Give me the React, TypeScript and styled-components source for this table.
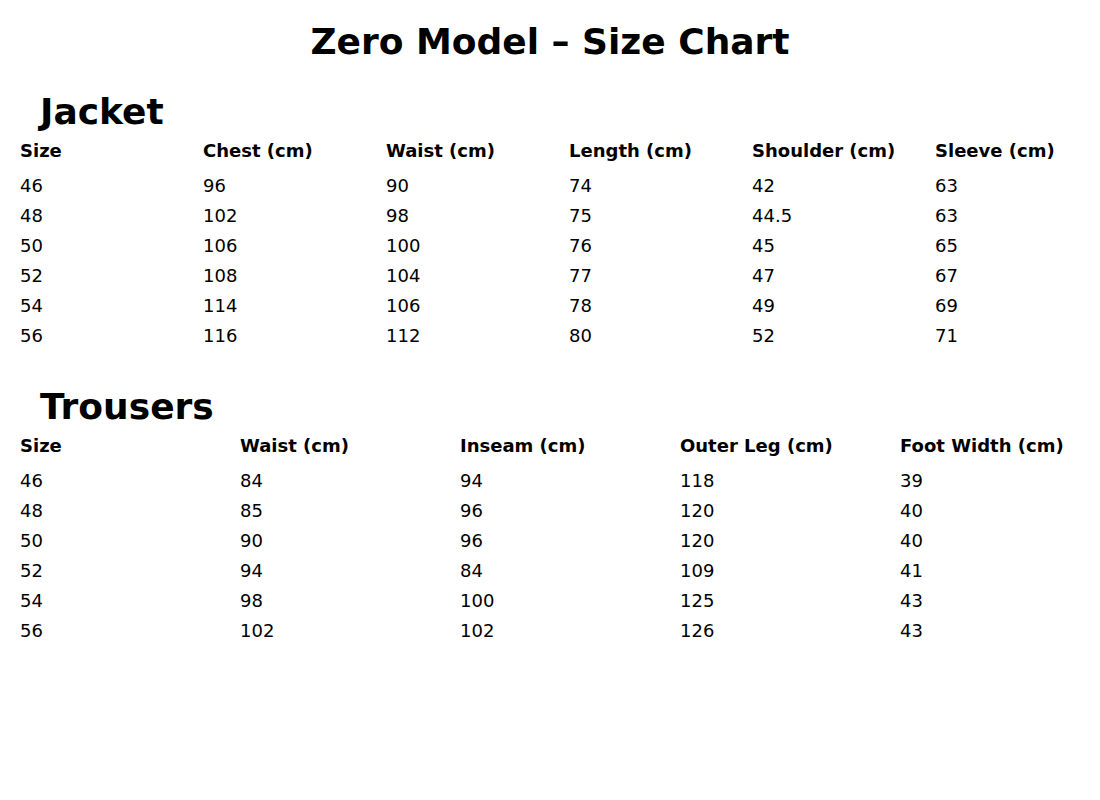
import React from "react";
import styled, { createGlobalStyle } from "styled-components";

const Global = createGlobalStyle`
  html, body { margin: 0; padding: 0; background: #fff; }
  body { font-family: "DejaVu Sans", "Liberation Sans", sans-serif; color: #000; }
`;

const Page = styled.div`
  width: 1100px;
  padding-top: 22px;
`;

const Title = styled.h1`
  margin: 0;
  font-size: 36px;
  line-height: 40px;
  font-weight: bold;
  text-align: center;
`;

const Section = styled.section<{ $top: number }>`
  margin-top: ${(p) => p.$top}px;
`;

const SectionTitle = styled.h2`
  margin: 0 0 4px 40px;
  font-size: 36px;
  line-height: 40px;
  font-weight: bold;
`;

const Grid = styled.div<{ $cols: number }>`
  display: grid;
  grid-template-columns: repeat(${(p) => p.$cols}, ${(p) => Math.floor(1100 / p.$cols)}px);
  width: 1100px;
`;

const HeadCell = styled.div`
  padding-left: 20px;
  height: 30px;
  line-height: 30px;
  margin-bottom: 5px;
  font-size: 18px;
  font-weight: bold;
  white-space: nowrap;
`;

const Cell = styled.div`
  padding-left: 20px;
  height: 30px;
  line-height: 30px;
  font-size: 18px;
  white-space: nowrap;
`;

type TableProps = { head: string[]; rows: string[][] };

const Table = ({ head, rows }: TableProps) => (
  <Grid $cols={head.length}>
    {head.map((h) => (
      <HeadCell key={h}>{h}</HeadCell>
    ))}
    {rows.map((r, i) => r.map((c, j) => <Cell key={`${i}-${j}`}>{c}</Cell>))}
  </Grid>
);

const jacket = {
  head: ["Size", "Chest (cm)", "Waist (cm)", "Length (cm)", "Shoulder (cm)", "Sleeve (cm)"],
  rows: [
    ["46", "96", "90", "74", "42", "63"],
    ["48", "102", "98", "75", "44.5", "63"],
    ["50", "106", "100", "76", "45", "65"],
    ["52", "108", "104", "77", "47", "67"],
    ["54", "114", "106", "78", "49", "69"],
    ["56", "116", "112", "80", "52", "71"],
  ],
};

const trousers = {
  head: ["Size", "Waist (cm)", "Inseam (cm)", "Outer Leg (cm)", "Foot Width (cm)"],
  rows: [
    ["46", "84", "94", "118", "39"],
    ["48", "85", "96", "120", "40"],
    ["50", "90", "96", "120", "40"],
    ["52", "94", "84", "109", "41"],
    ["54", "98", "100", "125", "43"],
    ["56", "102", "102", "126", "43"],
  ],
};

export default function App() {
  return (
    <Page>
      <Global />
      <Title>Zero Model – Size Chart</Title>
      <Section $top={30}>
        <SectionTitle>Jacket</SectionTitle>
        <Table {...jacket} />
      </Section>
      <Section $top={36}>
        <SectionTitle>Trousers</SectionTitle>
        <Table {...trousers} />
      </Section>
    </Page>
  );
}
